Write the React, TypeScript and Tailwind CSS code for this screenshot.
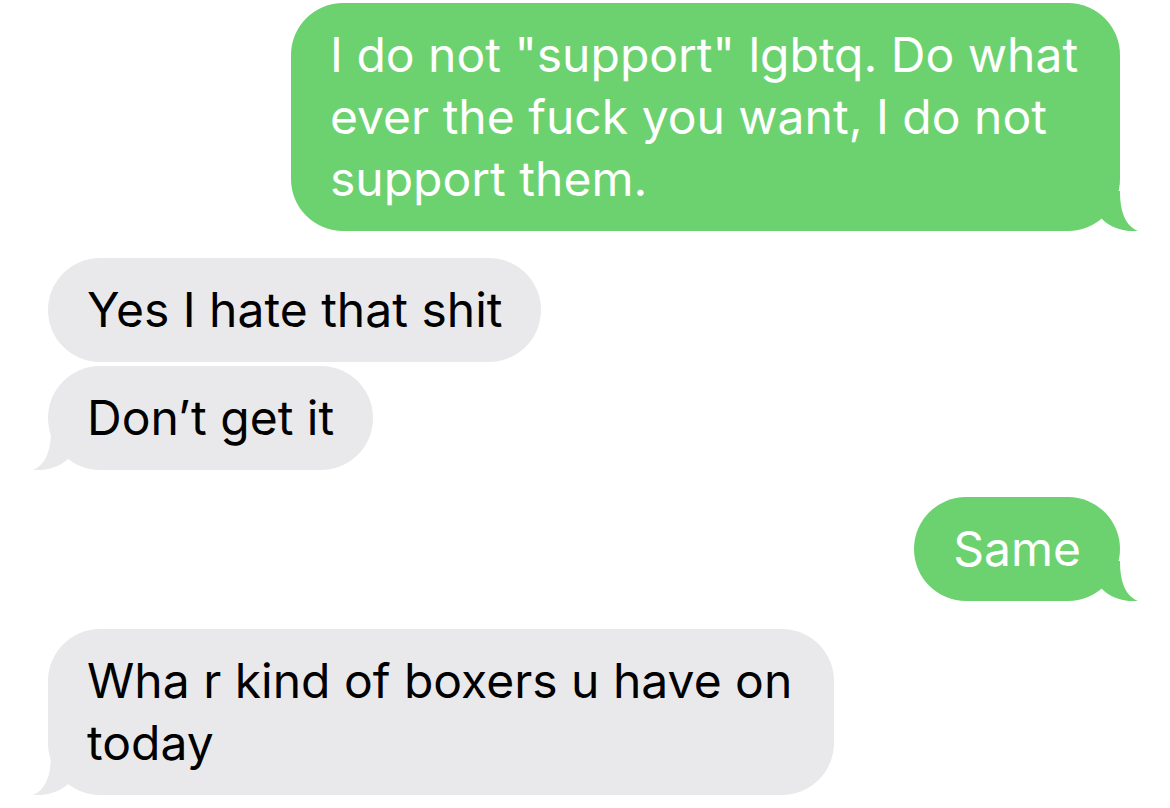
const GREEN = '#6cd26f';
const GRAY = '#e9e9eb';

const Tail = ({ side, color }: { side: 'left' | 'right'; color: string }) => (
  <svg
    width="40"
    height="40"
    viewBox="0 0 40 40"
    className={
      side === 'right'
        ? 'absolute bottom-0 right-[-18px]'
        : 'absolute bottom-0 left-[-15px] -scale-x-100'
    }
  >
    <path d="M22 0 C22 22 28 35 40 40 C28 41 14 38 4 28 L0 0 Z" fill={color} />
  </svg>
);

const Sent = ({ children, tail }: { children: React.ReactNode; tail?: boolean }) => (
  <div className="flex justify-end pr-[50px]">
    <div className="relative">
      <div className="relative z-10 rounded-[52px] bg-[#6cd26f] px-[39px] py-[21px] text-white">
        {children}
      </div>
      {tail && <Tail side="right" color={GREEN} />}
    </div>
  </div>
);

const Received = ({ children, tail }: { children: React.ReactNode; tail?: boolean }) => (
  <div className="flex justify-start pl-[48px]">
    <div className="relative">
      <div className="relative z-10 rounded-[52px] bg-[#e9e9eb] px-[39px] py-[21px] text-black">
        {children}
      </div>
      {tail && <Tail side="left" color={GRAY} />}
    </div>
  </div>
);

const App = () => {
  return (
    <div
      className="flex h-[808px] w-[1170px] flex-col overflow-hidden bg-white pt-[3px] text-[48px] leading-[62px]"
      style={{ fontFamily: 'Inter, "Liberation Sans", sans-serif' }}
    >
      <Sent tail>
        <p className="w-[751px]">
          I do not "support" lgbtq. Do what ever the fuck you want, I do not support them.
        </p>
      </Sent>
      <div className="mt-[27px]">
        <Received>
          <p>Yes I hate that shit</p>
        </Received>
      </div>
      <div className="mt-[4px]">
        <Received tail>
          <p>Don’t get it</p>
        </Received>
      </div>
      <div className="mt-[27px]">
        <Sent tail>
          <p>Same</p>
        </Sent>
      </div>
      <div className="mt-[28px]">
        <Received tail>
          <p className="w-[708px]">Wha r kind of boxers u have on today</p>
        </Received>
      </div>
    </div>
  );
};

export default App;
